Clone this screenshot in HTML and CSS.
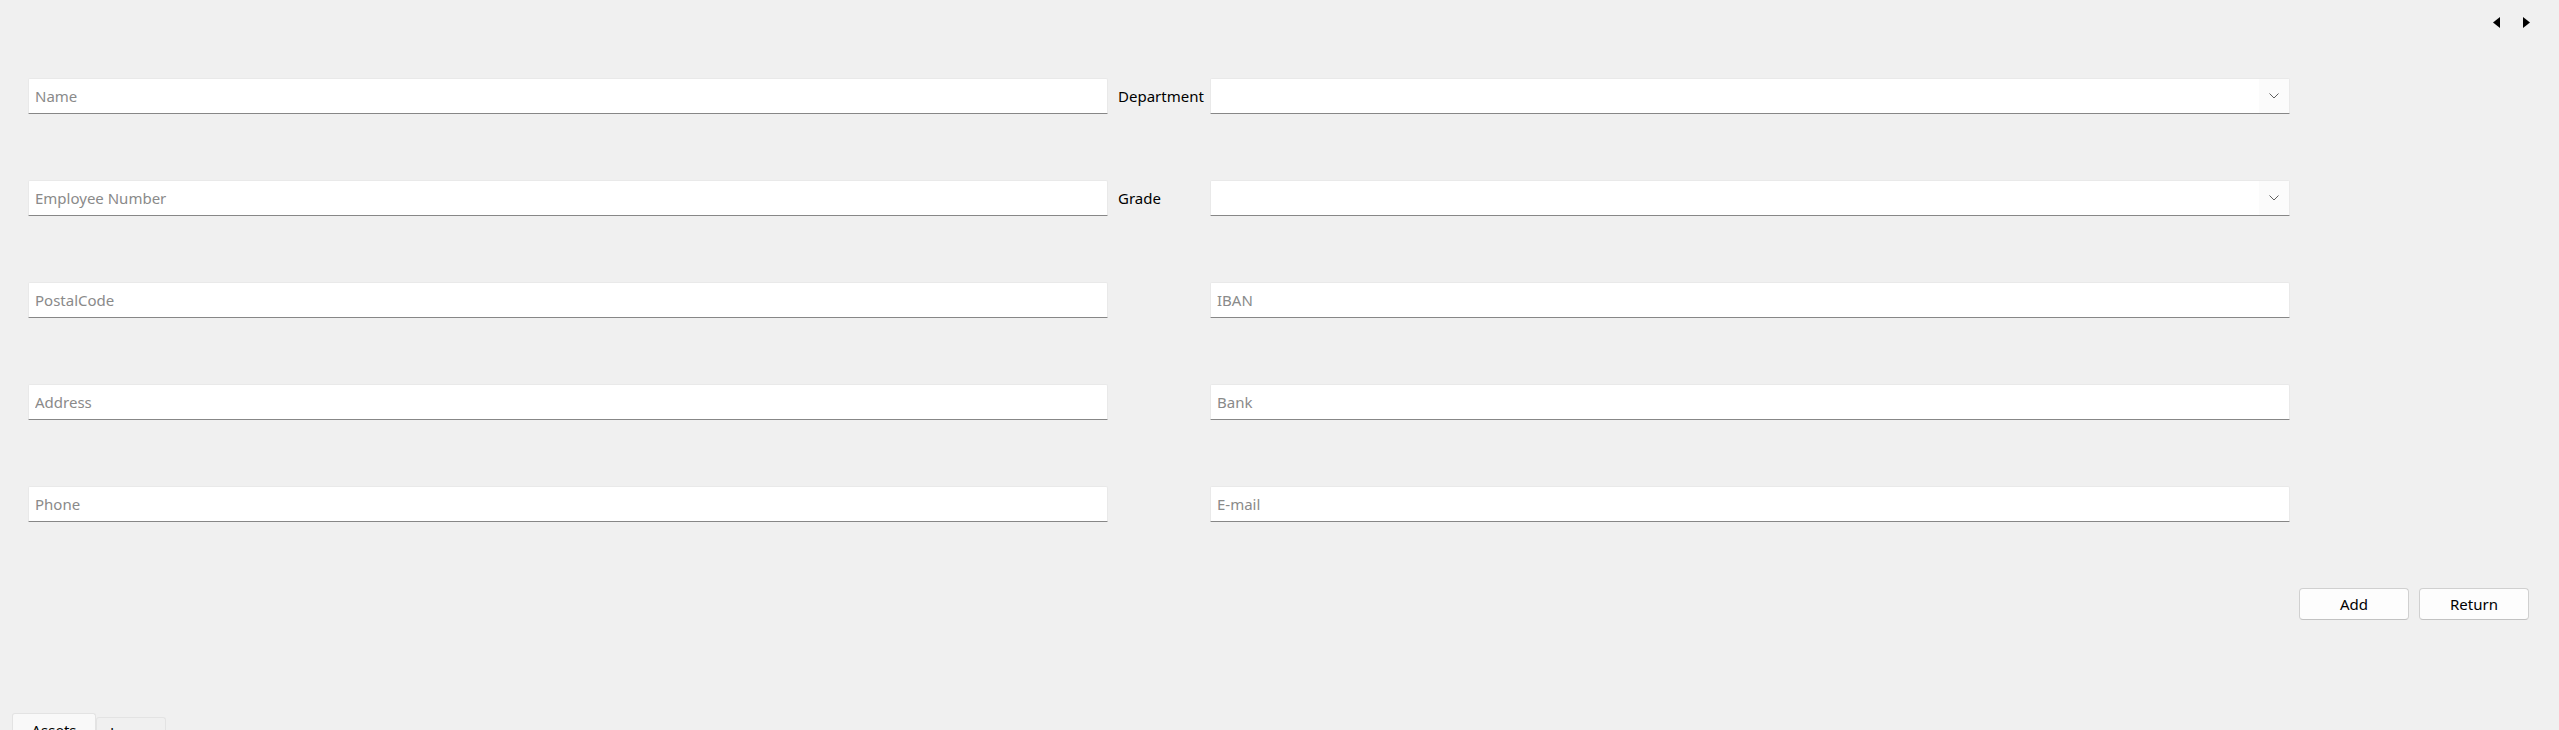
FILE: index.html
```html
<!DOCTYPE html>
<html lang="en">
<head>
<meta charset="utf-8">
<title>Employee</title>
<link rel="stylesheet" href="styles.css">
</head>
<body>
<div class="page">
  <div class="topbar">
    <button class="scroll-btn" aria-label="Previous">
      <svg width="7" height="11" viewBox="0 0 7 11"><polygon points="7,0 7,11 0,5.5" fill="#000"/></svg>
    </button>
    <button class="scroll-btn" aria-label="Next">
      <svg width="7" height="11" viewBox="0 0 7 11"><polygon points="0,0 0,11 7,5.5" fill="#000"/></svg>
    </button>
  </div>

  <form class="form-grid">
    <input class="field" type="text" placeholder="Name">
    <label class="label">Department</label>
    <div class="combo"><span class="combo-arrow"><svg width="10" height="6" viewBox="0 0 10 6"><polyline points="0.5,0.5 5,5 9.5,0.5" fill="none" stroke="#5f5f5f" stroke-width="1"/></svg></span></div>

    <input class="field" type="text" placeholder="Employee Number">
    <label class="label">Grade</label>
    <div class="combo"><span class="combo-arrow"><svg width="10" height="6" viewBox="0 0 10 6"><polyline points="0.5,0.5 5,5 9.5,0.5" fill="none" stroke="#5f5f5f" stroke-width="1"/></svg></span></div>

    <input class="field" type="text" placeholder="PostalCode">
    <span class="label"></span>
    <input class="field" type="text" placeholder="IBAN">

    <input class="field" type="text" placeholder="Address">
    <span class="label"></span>
    <input class="field" type="text" placeholder="Bank">

    <input class="field" type="text" placeholder="Phone">
    <span class="label"></span>
    <input class="field" type="text" placeholder="E-mail">
  </form>

  <div class="actions">
    <button class="btn">Add</button>
    <button class="btn">Return</button>
  </div>

  <div class="tabs">
    <div class="tab active">Assets</div>
    <div class="tab">Loans</div>
  </div>
</div>
</body>
</html>
```

FILE: styles.css
```css
* { box-sizing: border-box; }
html, body {
  margin: 0;
  padding: 0;
  background: #f0f0f0;
  height: 730px;
  overflow: hidden;
}
body {
  font-family: "Noto Sans", "Open Sans", sans-serif;
  font-size: 15px;
  color: #000;
}
.page {
  display: flex;
  flex-direction: column;
  width: 2559px;
}
.topbar {
  display: flex;
  justify-content: flex-end;
  gap: 23px;
  height: 78px;
  padding: 17px 29px 0 0;
}
.scroll-btn {
  border: 0;
  background: transparent;
  padding: 0;
  width: 7px;
  height: 11px;
  display: flex;
}
.form-grid {
  display: grid;
  grid-template-columns: 1080px 102px 1080px;
  grid-auto-rows: 36px;
  row-gap: 66px;
  margin: 0 0 0 28px;
}
.field, .combo {
  height: 36px;
  width: 100%;
  background: #fff;
  border: 1px solid #e9e9e9;
  border-bottom: 1px solid #878787;
  border-radius: 2px 2px 0 0;
  font-family: inherit;
  font-size: 15px;
  padding: 0 6px;
  outline: none;
  margin: 0;
}
.field::placeholder { color: #8a8a8a; }
.label {
  display: flex;
  align-items: center;
  padding-left: 10px;
  white-space: nowrap;
}
.combo {
  display: flex;
  justify-content: flex-end;
  align-items: center;
  padding: 0;
}
.combo-arrow {
  display: flex;
  align-items: center;
  justify-content: center;
  width: 30px;
  height: 100%;
  background: #fbfbfb;
}
.actions {
  display: flex;
  justify-content: flex-end;
  gap: 10px;
  margin-top: 66px;
  padding-right: 30px;
}
.btn {
  width: 110px;
  height: 32px;
  background: #fdfdfd;
  border: 1px solid #d0d0d0;
  border-bottom-color: #c2c2c2;
  border-radius: 4px;
  font-family: inherit;
  font-size: 15px;
  font-weight: 400;
  color: #000;
  padding: 0;
}
.tabs {
  display: flex;
  align-items: flex-start;
  margin-top: 93px;
  padding-left: 12px;
}
.tab {
  height: 30px;
  padding: 4px 0 0;
  line-height: 20px;
  text-align: center;
  border: 1px solid #e3e3e3;
  border-bottom: 0;
  border-radius: 3px 3px 0 0;
  background: #f0f0f0;
  margin-top: 4px;
  width: 70px;
}
.tab.active {
  width: 84px;
  margin-top: 0;
  background: #f9f9f9;
  padding-top: 6px;
}
```
